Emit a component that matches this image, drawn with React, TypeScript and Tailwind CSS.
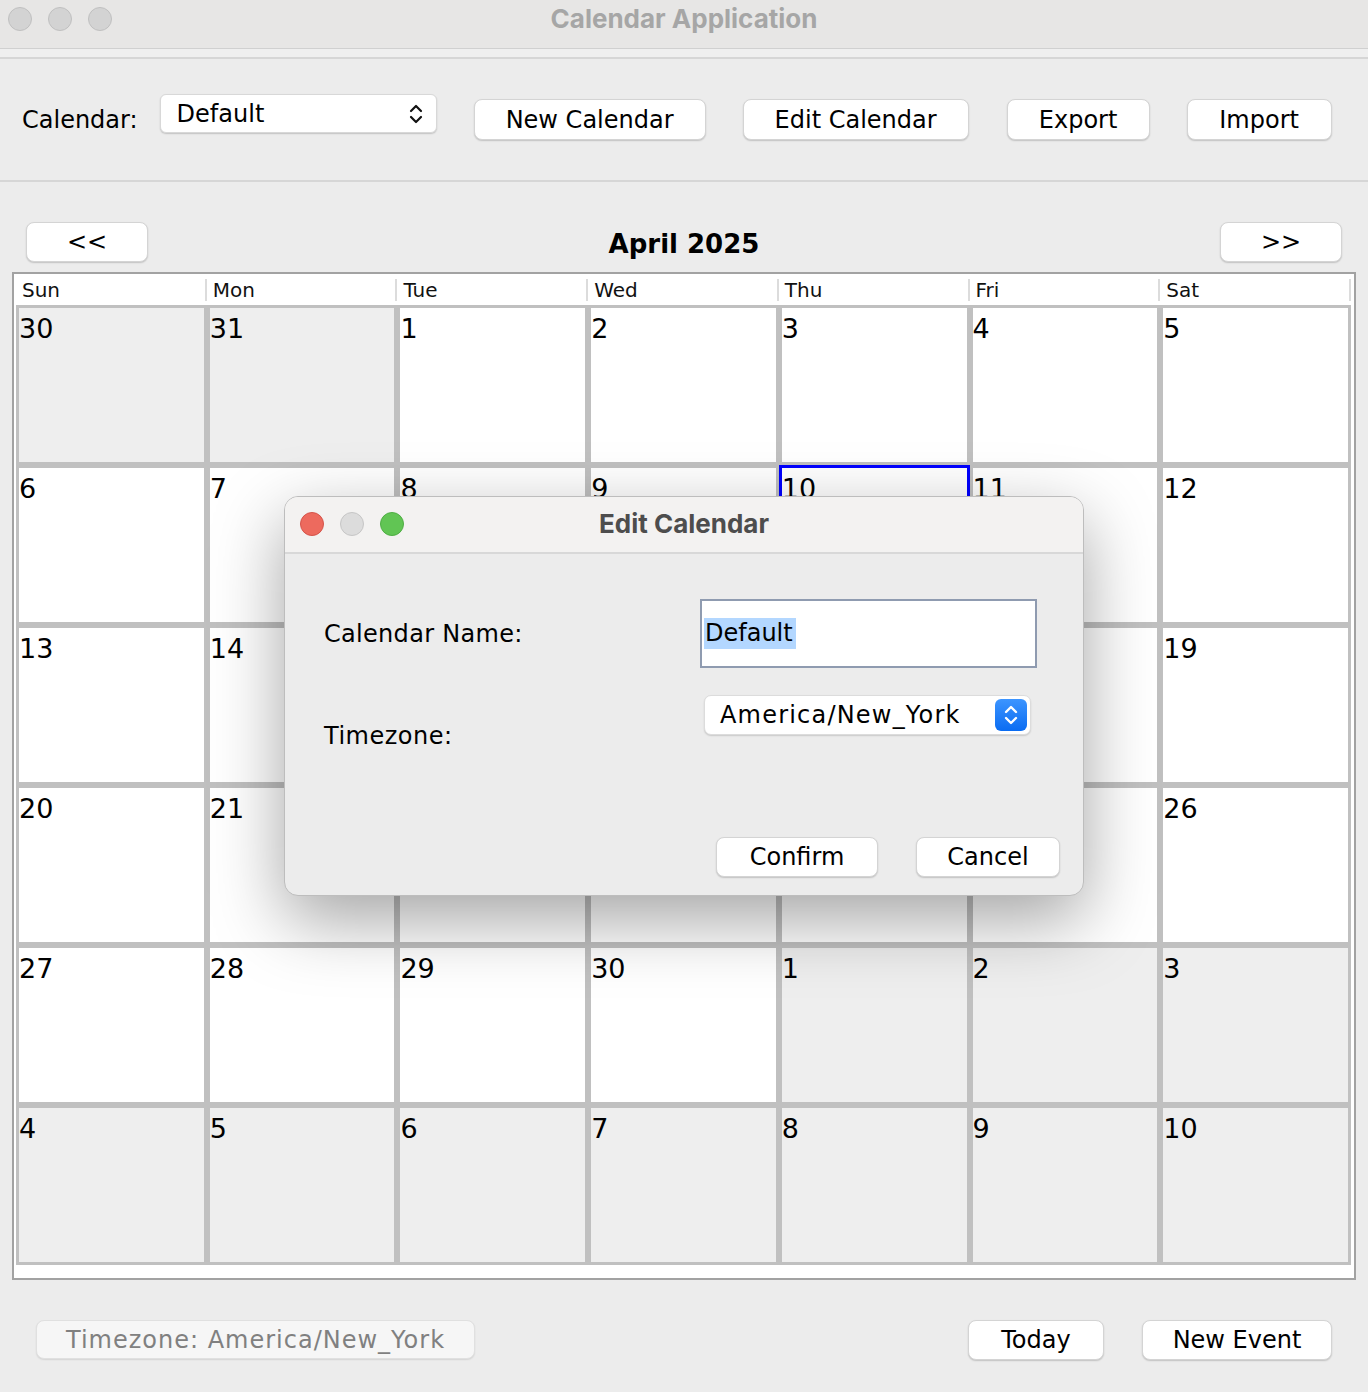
import React from 'react';

type Day = { n: number; inMonth: boolean };

const dayNames = ['Sun', 'Mon', 'Tue', 'Wed', 'Thu', 'Fri', 'Sat'];

// April 2025 with spill-over days from March and May
const days: Day[] = [
  { n: 30, inMonth: false },
  { n: 31, inMonth: false },
  ...Array.from({ length: 30 }, (_, i) => ({ n: i + 1, inMonth: true })),
  ...Array.from({ length: 10 }, (_, i) => ({ n: i + 1, inMonth: false })),
];

function MacButton({ label, className = '' }: { label: string; className?: string }) {
  return (
    <button
      className={`flex items-center justify-center bg-white rounded-[8px] border border-[#d4d4d4] shadow-[0_1px_1.5px_rgba(0,0,0,0.18)] text-[24px] text-black leading-none ${className}`}
    >
      {label}
    </button>
  );
}

function Lights({ colored }: { colored?: boolean }) {
  if (colored) {
    return (
      <div className="flex gap-[16px]">
        <span className="w-[24px] h-[24px] rounded-full bg-[#ed6a5e] border border-[#d5544a]" />
        <span className="w-[24px] h-[24px] rounded-full bg-[#dcdcdc] border border-[#c6c6c6]" />
        <span className="w-[24px] h-[24px] rounded-full bg-[#61c554] border border-[#4fae44]" />
      </div>
    );
  }
  return (
    <div className="flex gap-[16px]">
      <span className="w-[24px] h-[24px] rounded-full bg-[#d3d3d3] border border-[#c0c0c0]" />
      <span className="w-[24px] h-[24px] rounded-full bg-[#d3d3d3] border border-[#c0c0c0]" />
      <span className="w-[24px] h-[24px] rounded-full bg-[#d3d3d3] border border-[#c0c0c0]" />
    </div>
  );
}

export default function App() {
  return (
    <div className="relative w-[1368px] h-[1392px] overflow-hidden bg-[#ececec] font-['DejaVu_Sans',sans-serif] text-black">
      {/* Window title bar */}
      <div className="grid grid-cols-[1fr_auto_1fr] items-start h-[49px] pt-[7px] px-[8px] bg-[#e7e6e5] border-b border-[#d0d0d0]">
        <Lights />
        <div className="font-['Inter',sans-serif] font-bold text-[26px] leading-[24px] text-[#a6a6a6]">
          Calendar Application
        </div>
        <div />
      </div>
      <div className="h-[10px] bg-[#efefef] border-b-2 border-[#d6d6d6]" />

      {/* Toolbar */}
      <div className="flex items-start h-[123px] pt-[35px] pl-[22px] border-b-2 border-[#d6d6d6]">
        <span className="mt-[12px] text-[24px] leading-[28px]">Calendar:</span>
        <div className="ml-[22px] w-[277px] h-[39px] flex items-center justify-between pl-[16px] pr-[12px] bg-white rounded-[6px] border border-[#d8d8d8] shadow-[0_1px_1.5px_rgba(0,0,0,0.18)]">
          <span className="text-[24px] leading-none">Default</span>
          <svg width="16" height="26" viewBox="0 0 16 26" fill="none" stroke="#111" strokeWidth="2.2" strokeLinecap="round" strokeLinejoin="round">
            <path d="M3 10 L8 5 L13 10" />
            <path d="M3 16 L8 21 L13 16" />
          </svg>
        </div>
        <MacButton label="New Calendar" className="ml-[37px] mt-[5px] w-[232px] h-[41px]" />
        <MacButton label="Edit Calendar" className="ml-[37px] mt-[5px] w-[226px] h-[41px]" />
        <MacButton label="Export" className="ml-[38px] mt-[5px] w-[143px] h-[41px]" />
        <MacButton label="Import" className="ml-[37px] mt-[5px] w-[145px] h-[41px]" />
      </div>

      {/* Month navigation */}
      <div className="flex items-center justify-between h-[90px] pt-[40px] pb-[10px] pl-[26px] pr-[26px]">
        <MacButton label="<<" className="w-[122px] h-[40px]" />
        <span className="text-[26px] font-bold leading-none mt-[3px]">April 2025</span>
        <MacButton label=">>" className="w-[122px] h-[40px]" />
      </div>

      {/* Calendar grid */}
      <div className="ml-[12px] w-[1344px] h-[1008px] bg-white border-2 border-[#a2a2a2] pl-[2px] pr-[3px] flex flex-col">
        <div className="grid grid-cols-7 h-[31px]">
          {dayNames.map((d) => (
            <div key={d} className="flex items-center">
              <span className="flex-1 pl-[6px] text-[20px] leading-none text-[#111]">{d}</span>
              <span className="w-[2px] h-[22px] bg-[#dcdcdc]" />
            </div>
          ))}
        </div>
        <div className="grid grid-cols-7 grid-rows-6 h-[960px]">
          {days.map((d, i) => {
            const selected = d.inMonth && d.n === 10;
            return (
              <div
                key={i}
                className={`border-[3px] pt-[7px] text-[27px] leading-none ${
                  selected ? 'border-[#0000ff]' : 'border-[#c0c0c0]'
                } ${d.inMonth ? 'bg-white' : 'bg-[#eeeeee]'}`}
              >
                {d.n}
              </div>
            );
          })}
        </div>
      </div>

      {/* Bottom bar */}
      <div className="flex items-start pt-[40px] pl-[36px] pr-[36px]">
        <div className="w-[439px] h-[39px] flex items-center justify-center bg-[#f6f6f6] rounded-[8px] border border-[#e0e0e0] shadow-[0_1px_1.5px_rgba(0,0,0,0.1)] text-[24px] leading-none tracking-[1px] text-[#808080]">
          Timezone: America/New_York
        </div>
        <div className="flex-1" />
        <MacButton label="Today" className="w-[136px] h-[40px]" />
        <MacButton label="New Event" className="ml-[38px] w-[190px] h-[40px]" />
      </div>

      {/* Edit Calendar dialog */}
      <div className="absolute left-[284px] top-[496px] w-[800px] h-[400px] rounded-[14px] overflow-hidden bg-[#ececec] border border-[#bdbdbd] shadow-[0_24px_70px_rgba(0,0,0,0.36)] flex flex-col">
        <div className="grid grid-cols-[1fr_auto_1fr] items-start h-[57px] pt-[15px] px-[15px] bg-[#f3f2f1] border-b-2 border-[#d8d8d8]">
          <Lights colored />
          <div className="font-['Inter',sans-serif] font-bold text-[26px] leading-[24px] text-[#4d4d4d]">
            Edit Calendar
          </div>
          <div />
        </div>
        <div className="flex flex-col pl-[39px] pr-[23px] pt-[45px]">
          <div className="flex items-center h-[69px]">
            <span className="w-[376px] text-[24px] leading-none tracking-[0.3px]">Calendar Name:</span>
            <div className="w-[337px] h-[69px] flex items-center bg-white border-2 border-[#8f9bb0] pl-[2px]">
              <span className="bg-[#b3d7ff] text-[24px] leading-[31px] pl-[1px] pr-[3px]">Default</span>
            </div>
          </div>
          <div className="flex items-start mt-[27px]">
            <span className="w-[380px] mt-[27px] text-[24px] leading-[28px] tracking-[0.5px]">Timezone:</span>
            <div className="w-[327px] h-[40px] flex items-center justify-between pl-[15px] pr-[3px] bg-white rounded-[7px] border border-[#dcdcdc] shadow-[0_1px_1.5px_rgba(0,0,0,0.15)]">
              <span className="text-[24px] leading-none tracking-[1.2px]">America/New_York</span>
              <div className="w-[32px] h-[32px] rounded-[6px] bg-[linear-gradient(#3d95ff,#0a6cf2)] flex items-center justify-center">
                <svg width="16" height="26" viewBox="0 0 16 26" fill="none" stroke="#fff" strokeWidth="2.4" strokeLinecap="round" strokeLinejoin="round">
                  <path d="M3 10 L8 5 L13 10" />
                  <path d="M3 16 L8 21 L13 16" />
                </svg>
              </div>
            </div>
          </div>
          <div className="flex justify-end mt-[87px]">
            <MacButton label="Confirm" className="w-[162px] h-[40px]" />
            <MacButton label="Cancel" className="ml-[38px] w-[144px] h-[40px]" />
          </div>
        </div>
      </div>
    </div>
  );
}
